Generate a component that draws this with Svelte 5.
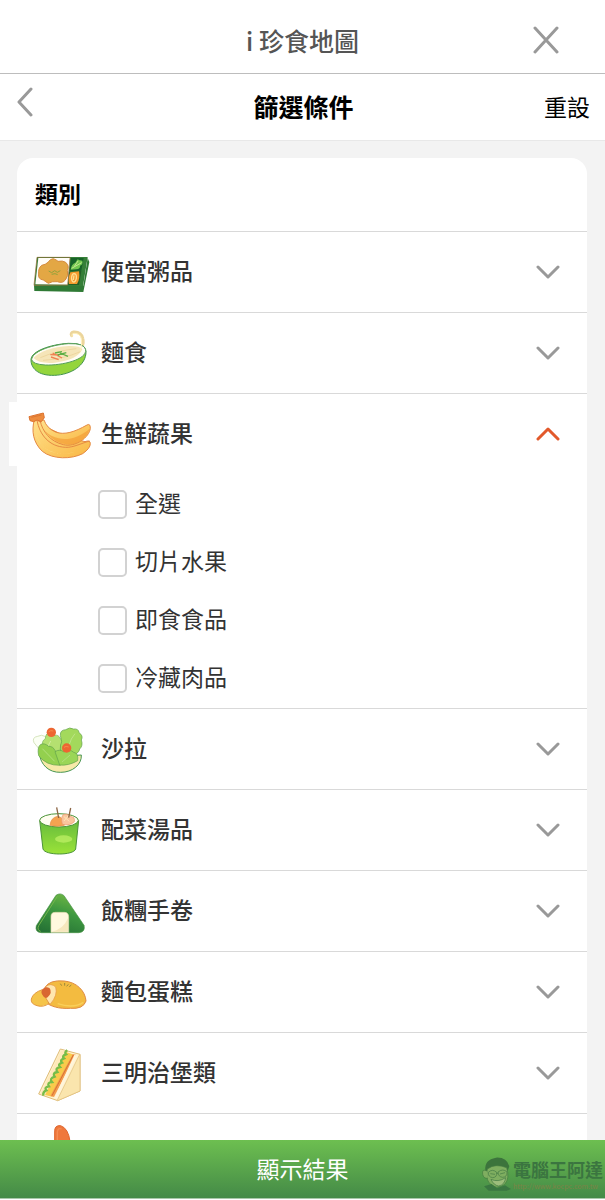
<script lang="ts">
  interface Category {
    id: string;
    name?: string;
    viewBox: string;
    options: string[];
  }

  const categories: Category[] = [
    { id: "bento", name: "便當粥品", viewBox: "21 0 192 192", options: [] },
    { id: "noodle", name: "麵食", viewBox: "21 3 192 192", options: [] },
    {
      id: "fresh",
      name: "生鮮蔬果",
      viewBox: "81 21 192 192",
      options: ["全選", "切片水果", "即食食品", "冷藏肉品"],
    },
    { id: "salad", name: "沙拉", viewBox: "21 6 192 192", options: [] },
    { id: "soup", name: "配菜湯品", viewBox: "21 9 192 192", options: [] },
    { id: "onigiri", name: "飯糰手卷", viewBox: "21 -3 192 192", options: [] },
    { id: "bread", name: "麵包蛋糕", viewBox: "21 -15 192 192", options: [] },
    { id: "sandwich", name: "三明治堡類", viewBox: "21 3 192 192", options: [] },
    { id: "fried", viewBox: "21 243 192 192", options: [] },
  ];

  let openId = $state("fresh");
  let selected = $state<string[]>([]);

  function toggle(id: string) {
    openId = openId === id ? "" : id;
  }

  function reset() {
    selected = [];
  }
</script>

{#snippet art(id: string)}
  {#if id === "bento"}
    <path d="M42 136L190 137L203 54L208 66L190 156L43 153Z" fill="#2f7a35" />
    <path d="M51 51H203L189 139L42 137Z" fill="#357f38" />
    <path d="M55 54H150L143 134L46 133Z" fill="#fffdf8" />
    <path d="M153 54H191L184 92L148 94Z" fill="#176329" />
    <path d="M147 96L184 93L177 135H144Z" fill="#245f28" />
    <path d="M100 56Q109 59 114 64Q128 61 137 67Q149 78 142 91Q147 106 136 120Q128 131 112 125Q96 123 85 130Q77 125 70 120Q53 117 56 102Q54 85 65 76Q77 74 84 67Q91 56 100 56Z" fill="#e3a744" stroke="#d58b3d" stroke-width="3" />
    <path d="M86 93L95 98L104 92L112 97L121 92M95 103L105 101L113 104" fill="none" stroke="#92a33a" stroke-width="3" />
    <path d="M152 89Q154 72 166 68L173 58Q177 62 187 62Q190 73 180 77Q181 87 169 88Z" fill="#72c750" />
    <path d="M155 85L185 68M163 79L174 63" stroke="#c5e791" stroke-width="3" />
    <path d="M151 97L177 94Q181 117 171 132H147Q143 114 151 97Z" fill="#f39b2d" />
    <path d="M158 102Q171 98 169 115Q166 129 158 125Q151 116 158 102M162 106L160 120" fill="none" stroke="#ffe094" stroke-width="4" />
    <path d="M42 136L51 52H150L143 135Z" fill="none" stroke="#a0703b" stroke-width="2" />
  {:else if id === "noodle"}
    <path d="M155 47Q150 39 161 36Q184 35 188 55Q193 69 184 85" fill="none" stroke="#ecd59b" stroke-width="9" stroke-linecap="round" />
    <path d="M33 118C35 94 88 74 145 70Q196 68 198 94C199 137 152 164 104 166C52 168 32 143 33 118Z" fill="#94d53c" stroke="#43934d" stroke-width="3" />
    <path d="M35 119C36 96 89 75 145 71Q193 69 197 89C201 119 126 137 76 135Q38 133 35 119Z" fill="#fffdf4" stroke="#559e5b" stroke-width="3" />
    <path d="M41 114C54 96 99 80 146 78Q181 77 187 88Q172 120 105 128Q57 132 41 114Z" fill="#f5e5b8" />
    <path d="M156 50Q154 40 162 40Q182 40 184 57Q187 78 180 96" fill="none" stroke="#fff0b9" stroke-width="3" />
    <path d="M61 113Q110 92 169 86M69 121Q128 118 181 95" fill="none" stroke="#e9cf91" stroke-width="2" />
    <path d="M91 104L117 105M98 99L126 114M93 111L116 119" stroke="#ef8051" stroke-width="4" />
    <path d="M105 99L126 95M120 99L144 109M113 105L139 98" stroke="#5eae45" stroke-width="4" />
  {:else if id === "fresh"}
    <defs>
      <linearGradient id="banana" x1="0" y1="0" x2="1" y2="1">
        <stop offset="0" stop-color="#ffe18b" />
        <stop offset="1" stop-color="#f9b744" />
      </linearGradient>
    </defs>
    <path d="M103 74C94 108 99 142 127 169C158 194 215 193 248 176Q271 160 271 146Q271 134 255 140L204 127L142 98L112 75Z" fill="url(#banana)" stroke="#e58a43" stroke-width="3" />
    <path d="M111 76C119 119 147 155 197 157C221 158 248 143 269 138" fill="none" stroke="#e58a43" stroke-width="3" />
    <path d="M120 75C127 110 150 139 190 149C226 158 268 127 271 100Q271 84 261 90C224 111 193 121 166 111Q140 99 132 75Z" fill="url(#banana)" stroke="#e58a43" stroke-width="3" />
    <path d="M130 103C165 142 221 142 269 101Q258 136 222 147Q169 156 130 103Z" fill="#f29b36" opacity="0.65" />
    <path d="M104 101Q112 149 145 166Q188 187 239 165Q206 182 165 173Q118 165 104 101Z" fill="#fff0a1" opacity="0.6" />
    <path d="M87 65L130 54L133 68L124 80L111 75L101 80L90 77Z" fill="#ed8c3e" stroke="#dd7330" stroke-width="3" stroke-linejoin="round" />
    <path d="M94 67L125 60" stroke="#d76d2c" stroke-width="2" />
  {:else if id === "salad"}
    <path d="M42 83Q35 67 53 64Q64 57 77 65L84 101L59 104Z" fill="#fbfff4" stroke="#c1d69f" stroke-width="2" />
    <path d="M68 94Q64 78 76 71Q77 53 91 51Q102 50 103 61Q116 58 120 70Q131 76 123 91L118 122L72 119Z" fill="#b4e070" stroke="#78b65c" stroke-width="2" />
    <path d="M121 61Q120 45 137 44Q150 35 160 42Q176 40 177 53Q191 62 184 75Q190 92 179 102Q177 115 158 121L127 123Q116 100 125 80Z" fill="#a3d95c" stroke="#5fa04b" stroke-width="2" />
    <path d="M140 110L154 72L165 56" fill="none" stroke="#bde486" stroke-width="3" />
    <path d="M79 104L92 78" fill="none" stroke="#d2edA0" stroke-width="3" />
    <path d="M58 116Q70 128 184 120C186 149 157 172 122 172C86 173 62 149 58 116Z" fill="#f7e9a8" stroke="#479653" stroke-width="3" />
    <path d="M56 122Q51 98 61 89Q72 82 86 94Q100 94 105 107Q124 119 121 151Q78 152 56 122Z" fill="#93d04e" stroke="#5fa04b" stroke-width="2" />
    <path d="M105 110Q119 101 132 111Q149 101 161 112Q176 114 173 137Q145 153 119 150Z" fill="#9bd657" stroke="#5fa04b" stroke-width="2" />
    <path d="M67 101L104 139M126 141L150 120" fill="none" stroke="#b2e07c" stroke-width="3" />
    <circle cx="94" cy="52" r="14" fill="#ed6632" />
    <circle cx="140" cy="99" r="14" fill="#ed6632" />
    <path d="M86 50Q92 45 100 48M132 97Q138 92 146 96" fill="none" stroke="#f58a4c" stroke-width="3" />
  {:else if id === "soup"}
    <defs>
      <linearGradient id="cup" x1="0" y1="0" x2="0" y2="1">
        <stop offset="0" stop-color="#66bb3d" />
        <stop offset="1" stop-color="#9be338" />
      </linearGradient>
    </defs>
    <path d="M59 76L69 162C75 182 161 182 167 162L176 76Z" fill="url(#cup)" stroke="#4c9439" stroke-width="3" />
    <ellipse cx="117" cy="76" rx="58" ry="20" fill="#fffef0" stroke="#4c9439" stroke-width="3" />
    <path d="M90 91Q93 67 113 64Q130 66 133 91Q113 97 90 91Z" fill="#f4a351" stroke="#e28d47" stroke-width="2" />
    <path d="M127 88Q121 66 131 58Q144 54 154 65Q165 65 163 80Q151 93 127 88Z" fill="#f9c59d" stroke="#e9966d" stroke-width="2" />
    <path d="M132 65L148 79M145 62L132 78" stroke="#ffe5b6" stroke-width="3" />
    <path d="M110 37L116 69M152 39L146 68" stroke="#8c6544" stroke-width="4" />
    <ellipse cx="131" cy="132" rx="26" ry="11" fill="#c6f56b" opacity="0.65" />
  {:else if id === "onigiri"}
    <defs>
      <linearGradient id="seaweed" x1="0.7" y1="0" x2="0.3" y2="1">
        <stop offset="0" stop-color="#70b744" />
        <stop offset="0.45" stop-color="#3e9840" />
        <stop offset="1" stop-color="#267335" />
      </linearGradient>
    </defs>
    <path d="M108 46Q121 37 132 47L192 136Q197 156 176 158H64Q44 157 49 137Z" fill="url(#seaweed)" stroke="#469343" stroke-width="2" />
    <path d="M112 49L56 137Q50 150 62 154" fill="none" stroke="#75b64c" stroke-width="3" />
    <path d="M93 157V111Q92 97 106 97H133Q146 97 146 111V157Z" fill="#fff8df" stroke="#e0d9ac" stroke-width="2" />
    <path d="M96 155Q130 148 144 115V155Z" fill="#f2dfae" opacity="0.7" />
  {:else if id === "bread"}
    <path d="M75 67Q89 44 132 48C170 51 196 78 198 108Q190 133 151 130C116 132 91 124 78 112Z" fill="#f3bb40" stroke="#df8a42" stroke-width="3" />
    <path d="M78 64Q93 53 107 66Q114 91 91 117Q79 113 76 99Z" fill="#ffe6af" stroke="#e5964a" stroke-width="2" />
    <path d="M34 102Q39 83 67 74Q76 101 87 115Q71 128 51 122Q31 116 34 102Z" fill="#f5c44a" stroke="#e49a42" stroke-width="3" />
    <path d="M68 72Q78 62 89 70Q98 83 83 97Q74 103 67 89Q61 81 68 72Z" fill="#d96731" />
    <path d="M121 56L125 62M134 54L134 62M145 58L140 64M154 60L148 65" stroke="#99893a" stroke-width="3" />
    <path d="M113 116Q160 132 190 112" fill="none" stroke="#f9cf5a" stroke-width="4" />
  {:else if id === "sandwich"}
    <path d="M121 27L180 43V153L113 182L56 162Z" fill="#fff2ce" stroke="#dfbd79" stroke-width="3" stroke-linejoin="round" />
    <path d="M123 31L141 33L74 166L61 161Z" fill="#ffe9ba" />
    <path d="M138 36L158 43L97 170L75 165Z" fill="#f9cb4b" />
    <path d="M158 42L167 44L102 171L91 168Z" fill="#f49a4f" />
    <path d="M142 31Q132 37 138 43Q124 48 132 55Q118 60 126 68Q112 73 120 81Q104 85 112 96Q96 99 104 110Q87 116 96 126Q80 128 87 139Q71 142 79 151Q68 155 70 167" fill="none" stroke="#76bd48" stroke-width="7" />
    <path d="M160 45L96 167" stroke="#d87531" stroke-width="3" />
    <path d="M177 47L112 180L113 182L180 153V44Z" fill="#fae5ad" stroke="#dfbd79" stroke-width="2" stroke-linejoin="round" />
    <path d="M167 46L107 175" stroke="#fff5da" stroke-width="8" />
  {:else}
    <path d="M104 320V273Q103 252 122 254Q145 262 150 301L153 330Z" fill="#ef783c" stroke="#df652d" stroke-width="3" />
    <path d="M112 302V273Q114 259 125 264" fill="none" stroke="#f58c53" stroke-width="4" />
  {/if}
{/snippet}

<div class="app">
  <header class="app-bar">
    <span class="app-title">i 珍食地圖</span>
    <button class="icon-button close" type="button" aria-label="關閉">
      <svg width="28" height="28" viewBox="0 0 28 28"><path d="M3 2L25 26M25 2L3 26" /></svg>
    </button>
  </header>

  <nav class="filter-bar">
    <button class="icon-button back" type="button" aria-label="返回">
      <svg width="16" height="30" viewBox="0 0 16 30"><path d="M14 2L2 15L14 28" /></svg>
    </button>
    <h1>篩選條件</h1>
    <button class="reset" type="button" onclick={reset}>重設</button>
  </nav>

  <main>
    <section class="card">
      <h2>類別</h2>
      {#each categories as category (category.id)}
        <div class="category">
          <button
            class="category-row"
            type="button"
            aria-expanded={openId === category.id}
            onclick={() => toggle(category.id)}
          >
            <span class="category-icon" class:open={openId === category.id}>
              <svg width="64" height="64" viewBox={category.viewBox}>{@render art(category.id)}</svg>
            </span>
            {#if category.name}
              <span class="category-name">{category.name}</span>
            {/if}
            <svg class="chevron" width="24" height="14" viewBox="0 0 24 14">
              <path d="M2 2L12 12L22 2" />
            </svg>
          </button>
          {#if openId === category.id && category.options.length}
            <div class="options">
              {#each category.options as option}
                <label class="option">
                  <input type="checkbox" value={option} bind:group={selected} />
                  <span>{option}</span>
                </label>
              {/each}
            </div>
          {/if}
        </div>
      {/each}
    </section>
  </main>

  <footer>
    <button class="submit" type="button">顯示結果</button>
    <div class="watermark">
      <svg width="32" height="34" viewBox="0 0 96 102">
        <path d="M13 39Q10 8 45 2Q77 0 85 28L80 42Q52 21 24 35L18 53Z" fill="#3c743c" />
        <path d="M19 36Q43 18 77 32Q87 64 71 82Q45 101 24 77Q13 60 19 36Z" fill="#7fae60" stroke="#447a40" stroke-width="2" />
        <path d="M18 42Q2 34 5 52Q8 65 20 64" fill="#7fae60" stroke="#447a40" stroke-width="2" />
        <path d="M22 46Q34 34 47 46Q49 61 35 62Q21 60 22 46ZM51 45Q66 33 78 45Q79 60 65 61Q52 60 51 45ZM47 49H51M28 50L42 52M57 51L72 47" fill="none" stroke="#427844" stroke-width="2" />
        <path d="M30 67Q51 77 74 62Q71 84 53 87Q38 85 30 67Z" fill="#9dbd7c" stroke="#427844" stroke-width="2" />
        <path d="M9 88L32 81L48 94L72 85L90 96L77 101H23Z" fill="#3a7741" />
      </svg>
      <div class="watermark-text">
        <span class="site-name">電腦王阿達</span>
        <span class="site-url">http://www.kocpc.com.tw</span>
      </div>
    </div>
  </footer>
</div>

<style>
  :global(body) {
    margin: 0;
    background: #fff;
  }

  .app {
    display: flex;
    flex-direction: column;
    height: 100vh;
    font-family: "Noto Sans CJK TC", "Noto Sans", sans-serif;
    color: #333;
  }

  button {
    padding: 0;
    border: 0;
    background: none;
    color: inherit;
    font: inherit;
    cursor: pointer;
  }

  svg {
    display: block;
    flex: none;
  }

  .app-bar,
  .filter-bar {
    display: grid;
    grid-template-columns: 1fr auto 1fr;
    align-items: center;
    flex: none;
    box-sizing: border-box;
    background: #fff;
  }

  .app-bar {
    height: 74px;
    padding: 6px 45px 0;
    border-bottom: 1px solid #bdbdbd;
  }

  .app-title {
    grid-column: 2;
    color: #555;
    font-size: 25px;
    font-weight: 500;
    line-height: 36px;
  }

  .icon-button path {
    fill: none;
    stroke: #999;
    stroke-width: 3;
    stroke-linecap: round;
    stroke-linejoin: round;
  }

  .close {
    justify-self: end;
  }

  .filter-bar {
    height: 67px;
    padding: 0 15px 2px 17px;
    border-bottom: 1px solid #e8e8e8;
    color: #000;
  }

  .back {
    justify-self: start;
    padding-bottom: 8px;
  }

  h1,
  h2 {
    margin: 0;
    color: #000;
    font-weight: 700;
  }

  h1 {
    font-size: 25px;
    line-height: 36px;
  }

  .reset {
    justify-self: end;
    font-size: 23px;
    line-height: 34px;
  }

  main {
    flex: 1;
    min-height: 0;
    padding: 17px 18px 0 17px;
    overflow-y: auto;
    scrollbar-width: none;
    background: #f3f3f3;
  }

  .card {
    border-radius: 16px 16px 0 0;
    background: #fff;
  }

  h2 {
    padding: 18px 18px 21px;
    font-size: 23px;
    line-height: 34px;
  }

  .category {
    border-top: 1px solid #d9d9d9;
  }

  .category-row {
    display: flex;
    align-items: center;
    gap: 10px;
    width: 100%;
    height: 80px;
    padding: 0 27px 0 10px;
    text-align: left;
  }

  .category-icon {
    position: relative;
  }

  .category-icon.open::before {
    content: "";
    position: absolute;
    top: 0;
    left: -18px;
    width: 64px;
    height: 64px;
    background: #fff;
  }

  .category-icon svg {
    position: relative;
  }

  .category-name {
    padding-bottom: 4px;
    font-size: 23px;
    font-weight: 500;
    line-height: 34px;
  }

  .chevron {
    margin-left: auto;
    fill: none;
    stroke: #999;
    stroke-width: 3;
    stroke-linecap: round;
    stroke-linejoin: round;
  }

  [aria-expanded="true"] .chevron {
    stroke: #e2592b;
    transform: rotate(180deg);
  }

  .options {
    padding: 1px 28px 1px 81px;
  }

  .option {
    display: flex;
    align-items: center;
    gap: 8px;
    height: 58px;
    font-size: 23px;
    line-height: 34px;
  }

  .option span {
    padding-bottom: 4px;
  }

  .option input {
    appearance: none;
    box-sizing: border-box;
    width: 29px;
    height: 29px;
    margin: 0;
    border: 2px solid #d2d2d2;
    border-radius: 5px;
    background: #fff;
  }

  .option input:checked {
    border-color: #55a849;
    background: #55a849;
  }

  footer {
    position: relative;
    flex: none;
    margin-bottom: 1px;
    border-bottom: 1px solid #a9c8aa;
    background: linear-gradient(#6dbf50, #448a47);
  }

  .submit {
    display: block;
    width: 100%;
    height: 58px;
    padding-bottom: 2px;
    color: #fff;
    font-size: 23px;
    line-height: 34px;
  }

  .watermark {
    position: absolute;
    right: 0;
    bottom: 7px;
    display: flex;
    align-items: center;
    width: 124px;
    pointer-events: none;
  }

  .watermark-text {
    display: flex;
    flex-direction: column;
    white-space: nowrap;
  }

  .site-name {
    color: #3b7540;
    font-size: 18px;
    font-weight: 700;
    line-height: 24px;
  }

  .site-url {
    color: #7c8347;
    font-size: 7px;
    line-height: 10px;
  }
</style>
